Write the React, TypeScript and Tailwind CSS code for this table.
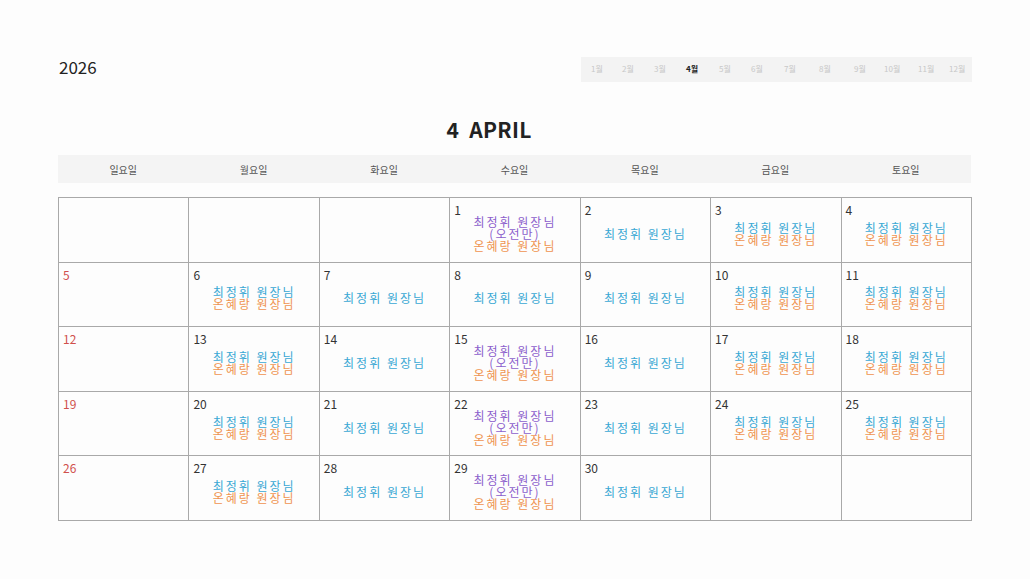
const FONT = "font-['Noto_Sans_CJK_KR','Noto_Sans',sans-serif]"

type Entry = 'b' | 'o' | 'p'
type Day = { d: number; e: Entry[] } | null

const months = ['1월', '2월', '3월', '4월', '5월', '6월', '7월', '8월', '9월', '10월', '11월', '12월']
const monthX = [10, 41, 73, 105, 138, 170, 203, 238, 273, 303, 337, 368]
const weekdays = ['일요일', '월요일', '화요일', '수요일', '목요일', '금요일', '토요일']

const bo: Entry[] = ['b', 'o']
const b: Entry[] = ['b']
const po: Entry[] = ['p', 'o']

const weeks: Day[][] = [
  [null, null, null, { d: 1, e: po }, { d: 2, e: b }, { d: 3, e: bo }, { d: 4, e: bo }],
  [{ d: 5, e: [] }, { d: 6, e: bo }, { d: 7, e: b }, { d: 8, e: b }, { d: 9, e: b }, { d: 10, e: bo }, { d: 11, e: bo }],
  [{ d: 12, e: [] }, { d: 13, e: bo }, { d: 14, e: b }, { d: 15, e: po }, { d: 16, e: b }, { d: 17, e: bo }, { d: 18, e: bo }],
  [{ d: 19, e: [] }, { d: 20, e: bo }, { d: 21, e: b }, { d: 22, e: po }, { d: 23, e: b }, { d: 24, e: bo }, { d: 25, e: bo }],
  [{ d: 26, e: [] }, { d: 27, e: bo }, { d: 28, e: b }, { d: 29, e: po }, { d: 30, e: b }, null, null],
]

function EntryLine({ kind }: { kind: Entry }) {
  if (kind === 'b') return <div className="text-[#3aa8d4]">최정휘 원장님</div>
  if (kind === 'o') return <div className="text-[#ef9450]">온혜랑 원장님</div>
  return (
    <>
      <div className="text-[#8c5fcc]">최정휘 원장님</div>
      <div className="text-[#8c5fcc]">(오전만)</div>
    </>
  )
}

function Cell({ day, col }: { day: Day; col: number }) {
  return (
    <td className="border border-[#a9a9a9] p-0 align-top">
      <div className="flex flex-col h-[63.6px] overflow-visible">
        {day && (
          <>
            <div className={`pl-[4px] pt-[4px] text-[12px] leading-[16px] ${col === 0 ? 'text-[#d0504c]' : 'text-[#333]'}`}>
              {day.d}
            </div>
            <div className="flex-1 min-h-0 flex flex-col items-center justify-center pb-[12px] text-[12px] leading-[12px] tracking-[2px]">
              {day.e.map((k, i) => (
                <EntryLine key={i} kind={k} />
              ))}
            </div>
          </>
        )}
      </div>
    </td>
  )
}

export default function App() {
  return (
    <div className={`w-[1030px] h-[579px] bg-[#fdfdfd] ${FONT} text-[#222]`}>
      <div className="pl-[58px] pt-[57px] w-[972px]">
        {/* top bar */}
        <div className="flex items-center justify-between h-[25px]">
          <div className="text-[17px] leading-none ml-[1px] mt-[-6px]">2026</div>
          <div className="relative w-[391px] h-[25px] bg-[#f3f3f3]">
            {months.map((m, i) => (
              <span
                key={m}
                className={`absolute top-[6px] text-[8px] leading-[12px] ${i === 3 ? 'text-[#222] font-bold' : 'text-[#c8c8c8]'}`}
                style={{ left: monthX[i] }}
              >
                {m}
              </span>
            ))}
          </div>
        </div>

        {/* title */}
        <div className="flex justify-center pr-[52px] mt-[33px] h-[28px]">
          <div className="text-[21px] leading-[28px] font-semibold tracking-[0.3px]">4&nbsp;&nbsp;APRIL</div>
        </div>

        {/* weekday header */}
        <div className="grid grid-cols-7 w-[913px] h-[28px] bg-[#f4f4f4] mt-[12px]">
          {weekdays.map((w) => (
            <div key={w} className="flex items-center justify-center text-[10px] text-[#555]">
              {w}
            </div>
          ))}
        </div>

        {/* calendar */}
        <table className="mt-[14px] w-[914px] table-fixed border-collapse">
          <tbody>
            {weeks.map((wk, r) => (
              <tr key={r}>
                {wk.map((day, c) => (
                  <Cell key={c} day={day} col={c} />
                ))}
              </tr>
            ))}
          </tbody>
        </table>
      </div>
    </div>
  )
}
